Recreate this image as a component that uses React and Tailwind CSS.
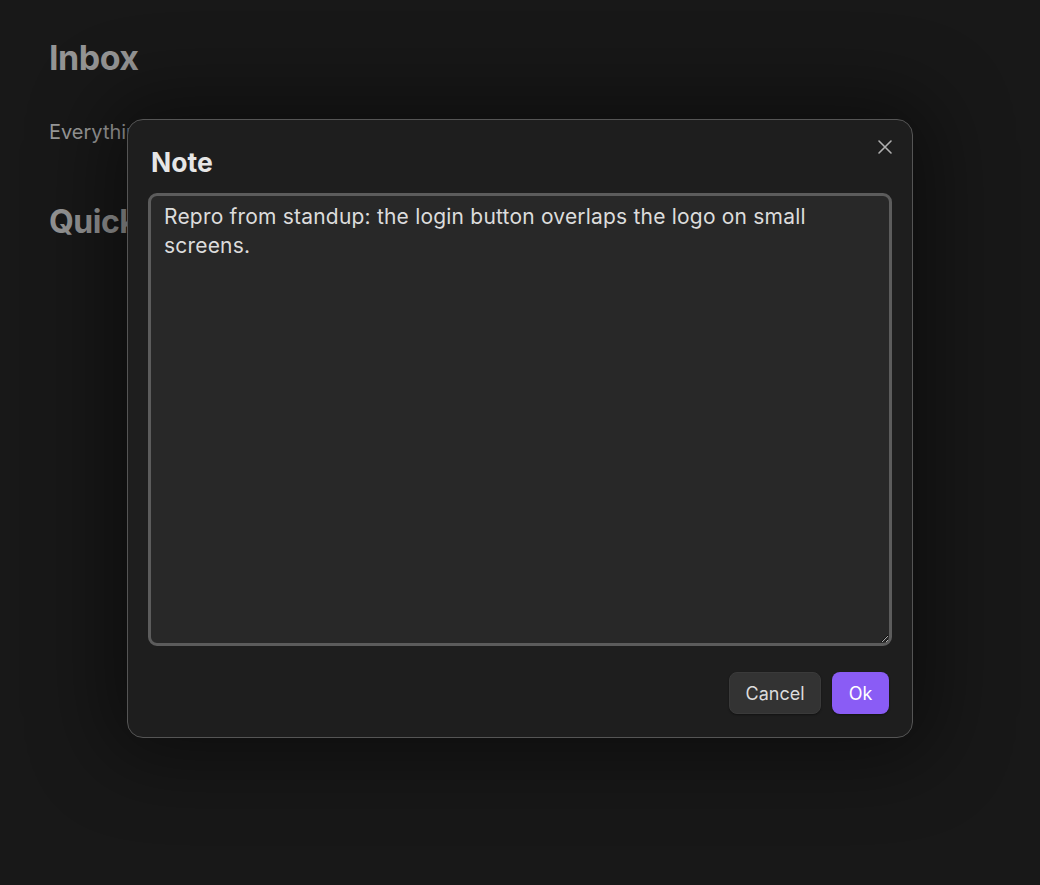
import React from "react";

export default function App() {
  return (
    <div className="relative w-[1040px] h-[885px] overflow-hidden bg-[#181818]" style={{ fontFamily: 'Inter, "Noto Sans", sans-serif' }}>
      {/* Page content behind */}
      <div className="px-[49px] pt-[36px] text-[#959595]">
        <h1 className="text-[34px] font-bold leading-[44px] tracking-[-0.5px]">Inbox</h1>
        <p className="mt-[37px] text-[20px] leading-[30px] text-[#9a9a9a]">Everything that lands here gets sorted later.</p>
        <h2 className="mt-[55px] text-[32px] font-bold leading-[40px] tracking-[-0.5px]">Quick capture</h2>
      </div>

      {/* Modal */}
      <div className="absolute left-[127px] top-[119px] w-[786px] h-[619px] rounded-[16px] border border-[#555555] bg-[#1e1e1e] shadow-[0_0_80px_20px_rgba(0,0,0,0.45)] flex flex-col px-[20px] pb-[23px]">
        <div className="absolute top-[17px] right-[17px] w-[20px] h-[20px] flex items-center justify-center text-[#b0b0b0]">
          <svg width="18" height="18" viewBox="0 0 18 18" fill="none" stroke="currentColor" strokeWidth="1.6" strokeLinecap="round">
            <path d="M3 3 L15 15 M15 3 L3 15" />
          </svg>
        </div>
        <div className="pt-[26px] pl-[3px] h-[73px] text-[26.5px] font-bold leading-[32px] text-[#e6e6e6]">Note</div>
        <textarea
          className="w-full h-[453px] resize-y rounded-[9px] border-[3px] border-[#5c5c5c] bg-[#282828] pl-[13px] pr-[30px] pt-[6px] text-[21px] tracking-[0.2px] leading-[29px] text-[#dcdcdc] outline-none"
          defaultValue="Repro from standup: the login button overlaps the logo on small screens."
        />
        <div className="mt-[26px] flex justify-end gap-[11px] pr-[3px]">
          <button className="h-[42px] w-[92px] rounded-[8px] border border-[#3a3a3a] bg-[#333333] text-[18px] text-[#dcdcdc] shadow-[0_1px_2px_rgba(0,0,0,0.4)]">Cancel</button>
          <button className="h-[42px] w-[57px] rounded-[8px] bg-[#8a5cf5] text-[18px] text-white shadow-[0_1px_2px_rgba(0,0,0,0.4)]">Ok</button>
        </div>
      </div>
    </div>
  );
}
